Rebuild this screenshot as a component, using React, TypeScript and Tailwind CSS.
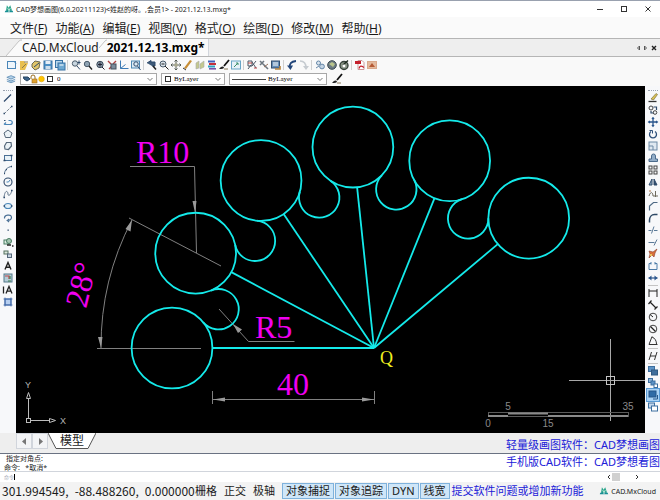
import type { ReactNode } from "react";

const NAVY = "#2f4a6b";
const BLUE = "#4a86b8";

type IconDef = { name: string; art: ReactNode };

const fileIcons: IconDef[] = [
  { name: "New", art: <><rect x="1.5" y="2.5" width="8" height="7" fill="#eef6fc" stroke={BLUE} /><path d="M8 2.5l2 2" stroke={BLUE} /></> },
  { name: "Open", art: <><path d="M2 2h4l1 2h3l-3 7H2z" fill="#e8bf4e" stroke="none" /><path d="M6 3h4M4 9l4-4" stroke="#8a7a4a" /></> },
  { name: "Open cloud", art: <><path d="M2 5l3-3 5 1-1 6-4 2-3-3z" fill="#e0c568" stroke="#6d6a50" /><path d="M4 8l5-4" stroke={NAVY} /></> },
  { name: "Save", art: <><rect x="2" y="2" width="8" height="8" fill="#4b8fc4" stroke="#3873a5" /><rect x="3.5" y="2" width="5" height="3" fill="#e5eef6" stroke="none" /><rect x="3.5" y="7" width="5" height="3" fill="#cfdfec" stroke="none" /></> },
  { name: "Save all", art: <><rect x="1.5" y="1.5" width="7" height="7" fill="#b9d7ec" stroke="#3873a5" /><rect x="4" y="4" width="7" height="7" fill="#6fa9d2" stroke="#3873a5" /><path d="M5.5 6h4" stroke="#fff" /></> },
];

const zoomIcons: IconDef[] = [
  { name: "Zoom in", art: <><circle cx="5" cy="4.5" r="2.7" fill="#c7d5df" stroke="#4c5d6d" /><path d="M7 7l3 3.5M9 1.5v4M7.5 3.5h3" stroke={NAVY} /></> },
  { name: "Zoom window", art: <><circle cx="5" cy="5" r="2.7" fill="#8fa3b3" stroke="#4c5d6d" /><path d="M7 7l3 3.5" stroke="#222" strokeWidth="1.4" /></> },
  { name: "Zoom extents", art: <><circle cx="6" cy="5.5" r="3.2" fill="#8494a3" stroke="#3c4a59" /><path d="M4 5.5h4M6 3.5v4M8 8l2.5 2.5" stroke="#223" /></> },
  { name: "Zoom all", art: <><path d="M2 2l3 3M10 2L7 5M3 10l3-3" stroke="#b04040" strokeWidth="1.4" /><rect x="5" y="5" width="5" height="5" fill="#7c8c9b" stroke="#44525f" /></> },
  { name: "Coordinate axes", art: <path d="M2.5 1.5v8h8M2.5 9.5l5-4" stroke="#3c7ab4" /> },
  { name: "Zoom object", art: <><rect x="1.5" y="2" width="8" height="7" fill="#dcebf5" stroke="#4c87b4" /><circle cx="6" cy="5" r="2.2" fill="none" stroke={NAVY} /><path d="M7.5 7l3 4" stroke={NAVY} /></> },
];

const matchIcon: IconDef = {
  name: "Match properties",
  art: <><path d="M11 1L6 7" stroke="#111" strokeWidth="1.8" /><path d="M1 10c2-3 4-3 5-2 0 2-2 2-5 2z" fill="#222" stroke="none" /><path d="M6 10h4" stroke="#8a7a5a" /></>,
};

const viewIcons: IconDef[] = [
  { name: "Previous view", art: <><path d="M1 4l4-2.5v1.5h4v4H6" fill="#3e5a78" stroke={NAVY} /><path d="M7 7l3 3.5" stroke="#222" strokeWidth="1.5" /></> },
  { name: "Real time zoom", art: <><circle cx="5" cy="5" r="3" fill="#d8e2ea" stroke="#4c5d6d" /><path d="M3.5 5h3M7 7l3.5 3.5" stroke="#222" /></> },
  { name: "Pan", art: <><path d="M6 1v10M1 6h10M4.5 2.5L6 1l1.5 1.5M4.5 9.5L6 11l1.5-1.5M2.5 4.5L1 6l1.5 1.5M9.5 4.5L11 6 9.5 7.5" stroke="#555c54" /><rect x="4.5" y="4.5" width="3" height="3" fill="#aaa98c" stroke="none" /></> },
  { name: "Pencil", art: <><path d="M2 9l2 1 6-8-2-1z" fill="#c78e35" stroke="none" /><path d="M1 9l3 2" stroke="#333" /></> },
  { name: "Measure", art: <><path d="M2 4l3-2v7l-3 1zM6 5l4-3v6l-4 2z" fill="#c4c98f" stroke="#aaa" strokeWidth=".6" /></> },
  { name: "Colors", art: <><path d="M2 2.5h7" stroke="#4160bd" strokeWidth="2" /><path d="M3 5h7" stroke="#c3303c" strokeWidth="2" /><path d="M2 7.5h7" stroke="#2d9fc4" strokeWidth="2" /><path d="M3 9.8h7" stroke="#7651ab" strokeWidth="1.6" /></> },
  matchIcon,
  { name: "Full screen", art: <><rect x="1.5" y="2" width="9" height="8" fill="#e6f1f8" stroke="#68a5c7" /><path d="M4 8l4-4M6 4h2v2" stroke="#3d8f6b" /></> },
];

const editIcons: IconDef[] = [
  { name: "Find", art: <><path d="M2 2h4v5H2zM6 3l4 6M2 10l3-4M10 2L6 7" stroke="#4b5664" /><path d="M2 4h4M8 9h3" stroke="#c04a4a" /></> },
  { name: "Tools", art: <><path d="M2 2l8 8M2 6l4-4" stroke="#6d7780" strokeWidth="1.6" /><path d="M6 8l4-3" stroke="#98735f" /></> },
  { name: "Layers table", art: <><rect x="1.5" y="2" width="8" height="7" fill="#668eb8" stroke="#334d6e" /><path d="M3 4h5M3 6h5" stroke="#fff" /><path d="M5 10h5V7" stroke="#b4833f" strokeWidth="1.6" /></> },
];

const historyIcons: IconDef[] = [
  { name: "Undo", art: <><path d="M4 9C3 5 5 2.5 10 2" stroke="#23467a" strokeWidth="1.8" /><path d="M1 6.5l3.5 4.5 2.5-4.5z" fill="#23467a" stroke="none" /></> },
  { name: "Redo", art: <><path d="M2 2c5 0 6 3 6 7" stroke="#c6cbd0" strokeWidth="1.6" /><path d="M5 7l3 4 3-4z" fill="#c6cbd0" stroke="none" /></> },
];

const cloudIcons: IconDef[] = [
  { name: "Cloud user", art: <><circle cx="4.5" cy="4" r="2" fill="#dbe5ee" stroke="#6587a8" /><circle cx="8" cy="7.5" r="2.4" fill="#c4d4e4" stroke="#6587a8" /><path d="M2 9l3-2" stroke="#6587a8" /></> },
  { name: "Cloud globe", art: <><circle cx="6" cy="6" r="4.3" fill="#6b7a83" stroke="#3d4a50" /><path d="M3 5l3-2 3 2-2 3z" fill="#b9c48b" stroke="none" /></> },
  { name: "Cloud sync", art: <><circle cx="6" cy="6.5" r="4" fill="#8a9587" stroke="#37423a" strokeWidth="1.4" /><path d="M5 6l5-4.5" stroke="#1d2a1f" strokeWidth="1.4" /><circle cx="6" cy="7" r="1.4" fill="#fff" stroke="none" /></> },
];

const exportIcons: IconDef[] = [
  { name: "Export PDF", art: <><path d="M4 1.5h4l2 2v7H4z" fill="#fff" stroke="#c99" /><rect x="1" y="2" width="6" height="3" fill="#c4202b" stroke="none" /><path d="M5 9.500c1-3 2-3 5-1" stroke="#c4202b" strokeWidth="1.2" /></> },
  { name: "Export image", art: <><rect x="1.5" y="2.5" width="9" height="7" fill="#e3b99d" stroke="#d9a98c" /><path d="M3 8l3-4 3 4z" fill="#b55a34" stroke="none" /></> },
];

const drawIcons: IconDef[] = [
  { name: "Line", art: <path d="M2 9.5l7-7" stroke={NAVY} strokeWidth="1.2" /> },
  { name: "Construction line", art: <><path d="M2 10l8-8" stroke="#7a8794" strokeDasharray="3 1" /><path d="M1.5 9.5h1.5M9 2.5h1.5" stroke={NAVY} strokeWidth="1.6" /></> },
  { name: "Polyline", art: <><path d="M2 8.5h6c3 0 3-4 0-4H6.5M2 8.5l2-2" stroke={BLUE} strokeWidth="1.2" /><path d="M2 4.5h1.5" stroke={NAVY} /></> },
  { name: "Polygon", art: <path d="M6 2l4 3-1.5 4.5h-5L2 5z" fill="#eaf1f6" stroke="#55677a" /> },
  { name: "Irregular polygon", art: <path d="M4.5 2.5L9 2.5 9.5 6 6.5 9.5 3 9 2.5 6z" fill="#eaf1f6" stroke="#55677a" strokeWidth="1.2" /> },
  { name: "Rectangle", art: <><rect x="2.5" y="3.5" width="7" height="5" fill="#e8f2f8" stroke="#4a6f95" /><path d="M1.5 8.5h2M8.5 3.5h2" stroke={NAVY} strokeWidth="1.6" /></> },
  { name: "Arc", art: <><path d="M2.5 10c0-4 3-7 7-7.5" stroke="#55708c" /><path d="M2 9.5h1M9 2.5h1M4 5.5h1" stroke={NAVY} strokeWidth="1.5" /></> },
  { name: "Circle", art: <><circle cx="6" cy="6" r="4" fill="none" stroke={NAVY} strokeWidth="1.1" /><path d="M4.5 6h2l1.5-2" stroke={BLUE} /></> },
  { name: "Spline", art: <><path d="M2 9.5C3 1 6 3 6 6s3 1 4-4" stroke="#5e7389" /><path d="M1.5 9.5H3M9 2.5h1.5" stroke={NAVY} strokeWidth="1.5" /></> },
  { name: "Ellipse", art: <><ellipse cx="6" cy="6" rx="3.5" ry="2.5" fill="#e4f0f8" stroke={BLUE} strokeWidth="1.2" /><path d="M1.5 6H3M9 6h1.5" stroke={NAVY} strokeWidth="1.5" /></> },
  { name: "Ellipse arc", art: <path d="M2.5 6.5C2 2.5 9 2 9.5 5c0 3-2.5 3.500-4 3.500L7 7M5.5 8.5L7 10" stroke="#4a6f95" strokeWidth="1.2" /> },
  { name: "Point", art: <rect x="5.500" y="5.500" width="1.300" height="1.300" fill={NAVY} stroke="none" /> },
  { name: "Insert block", art: <><rect x="2" y="4" width="5" height="4" fill="#dcebe1" stroke="#467b60" /><circle cx="7" cy="5" r="2.5" fill="#a5c4b1" stroke="#467b60" /><path d="M5 9h4M10 10h1.5" stroke="#222" strokeWidth="1.4" /></> },
  { name: "Create block", art: <><rect x="2" y="3" width="4" height="3" fill="#dce8df" stroke="#55705e" /><rect x="5.5" y="6" width="4" height="3.5" fill="#c9d6e0" stroke="#55677a" /></> },
  { name: "Text", art: <path d="M3 9.5L6 2.5l3 7M4 7.2h4" stroke="#222" strokeWidth="1.4" /> },
  { name: "Hatch", art: <><rect x="2" y="2" width="8" height="8" fill="#b4cdd8" stroke="#54788a" /><path d="M3 4h4v3" stroke="#c04848" strokeWidth="1.2" /><path d="M6 9h3M8 4v3" stroke="#3f7f4f" strokeWidth="1.2" /></> },
  { name: "Multiline text", art: <path d="M1.500 2.5v7M4 9.500l3-7 3 7M5 7.2h4" stroke="#222" strokeWidth="1.3" /> },
  { name: "Region", art: <><rect x="3" y="3" width="6" height="6" fill="#b7cff0" stroke="#3d66a5" /><path d="M3 1.5v9M9 1.5v9M1.5 3h9M1.5 9h9" stroke="#3d66a5" strokeWidth=".8" /></> },
];

const modifyIcons: IconDef[] = [
  { name: "Erase", art: <><path d="M4 7l5-5.5 1.5 1-4 5.5z" fill="#d9c057" stroke="#6e6430" strokeWidth=".6" /><path d="M1.5 9.5h8" stroke="#333" strokeWidth="1.3" /></> },
  { name: "Copy", art: <><circle cx="4" cy="4" r="2" fill="none" stroke="#444" /><path d="M6.5 3h3v3M4 7v2h3" stroke={NAVY} strokeWidth="1.2" /><circle cx="8" cy="8.5" r="1.8" fill="none" stroke="#444" /></> },
  { name: "Move", art: <path d="M6 2v8M2 6h8M5 3l1-1.300L7 3M5 9l1 1.300L7 9M3 5L1.700 6 3 7M9 5l1.300 1L9 7" stroke="#2b568d" strokeWidth="1.3" /> },
  { name: "Rotate", art: <><path d="M8 3.5a3.500 3.500 0 1 1-4 0" stroke="#2d4f7a" strokeWidth="1.3" /><path d="M2.5 2.5h3v3" stroke="#2d4f7a" /></> },
  { name: "Scale", art: <><rect x="2" y="2" width="8" height="8" fill="#dfe8f1" stroke="#6d89a5" /><path d="M2 6h4v4" stroke="#6d89a5" /></> },
  { name: "Offset", art: <><path d="M2 9.5h8.500V7H8.500V4a2 2 0 0 0-4 0v3H2z" fill="#92adc8" stroke="#4b6b8c" /></> },
  { name: "Array", art: <><rect x="2" y="2" width="3" height="3" fill="none" stroke="#444" /><rect x="7" y="2" width="3" height="3" fill="none" stroke="#444" /><rect x="2" y="7" width="3" height="3" fill="none" stroke="#444" /><rect x="7" y="7" width="3" height="3" fill="none" stroke="#444" /></> },
  { name: "Mirror", art: <><path d="M5 3v6H2z" fill="#8aa5bd" stroke={NAVY} /><path d="M7 3v6h3z" fill={NAVY} stroke={NAVY} /></> },
  { name: "Trim spline", art: <><path d="M2 8c2-6 4-3 4 0M6 8h5M8.5 3v6" stroke="#6e6a5d" /><path d="M2 3h2" stroke="#b37b4d" /></> },
  { name: "Chamfer", art: <path d="M2.5 10.5V6l4-3.500h4" stroke="#4f6a85" strokeWidth="1.2" /> },
  { name: "Fillet", art: <path d="M2.5 10.5V8c0-3 2-5.500 5-5.500h3" stroke="#2e4966" strokeWidth="1.5" /> },
  { name: "Trim", art: <path d="M1.5 6.5h3M7 6.5h3.5M4.500 9.5l2.500-7" stroke="#5b7a98" /> },
  { name: "Extend", art: <path d="M1.5 6.5h6M7 9.5l3-6" stroke="#5b7a98" /> },
  { name: "Explode", art: <><path d="M2 3l4 1 4-3-2 4-1 4-2-2-3 3 1-4z" fill="#d9713c" stroke="#8c3c2a" strokeWidth=".6" /><rect x="3" y="6" width="2" height="2" fill="#e9c25b" stroke="none" /></> },
  { name: "Break", art: <path d="M4 3.5H2v6h8v-6H8M4 2v2.5M8 2v2.5" stroke="#4d7ca8" /> },
  { name: "Join", art: <><path d="M1.5 6h9" stroke="#2b568d" strokeWidth="1.2" /><path d="M4.500 3.5L1.500 6l3 2.500zM7.500 3.5l3 2.500-3 2.500z" fill="#2b568d" stroke="none" /></> },
];

const dimIcons: IconDef[] = [
  { name: "Linear dimension", art: <path d="M2 2v8M10 2v8M2 4h8" stroke="#222" /> },
  { name: "Aligned dimension", art: <><path d="M3 3l6 6M1.5 5L4.5 1.5M7.5 10.5l3-3" stroke="#222" strokeWidth="1.2" /></> },
  { name: "Radius dimension", art: <><circle cx="6" cy="6" r="3.8" fill="none" stroke="#444" /><path d="M6 6L3 3.5" stroke="#222" /></> },
  { name: "Diameter dimension", art: <><circle cx="6" cy="6" r="3.8" fill="none" stroke="#444" /><path d="M3.5 3.5l5 5" stroke="#222" strokeWidth="1.2" /></> },
  { name: "Angular dimension", art: <path d="M5 1.500L2 9.500h8.500M5 2c3 1 4.500 4 4.500 7" stroke="#333" /> },
];

const dimEditIcon: IconDef = {
  name: "Edit dimension",
  art: <path d="M2 10L4.5 2M7.5 10L10 2M3 6h6" stroke="#333" />,
};

const orderIcons: IconDef[] = [
  { name: "Bring to front", art: <><rect x="1.5" y="1.5" width="6" height="5" fill="#5d93c6" stroke="#3c6f9f" /><rect x="4.5" y="5" width="6" height="5" fill="#3e6e9c" stroke="#2f5880" /></> },
  { name: "Bring above", art: <><rect x="1.5" y="1.5" width="4" height="4" fill="#8fb6da" stroke="#3c6f9f" /><rect x="4" y="4" width="4" height="4" fill="#5d93c6" stroke="#3c6f9f" /><rect x="7" y="7" width="3.5" height="3.5" fill="#fff" stroke="#3c6f9f" /></> },
  { name: "Send to back", art: <><rect x="2" y="2" width="7" height="6" fill="#2f6ba6" stroke="#27578a" /><path d="M6 10h4.5V6" stroke="#27578a" /></> },
  { name: "Send under", art: <><rect x="1.5" y="2" width="6" height="5" fill="#c4d8ee" stroke="#3c6f9f" /><rect x="4.5" y="5" width="6" height="5" fill="#fff" stroke="#3c6f9f" /></> },
];

function ToolButton({ icon, active }: { icon: IconDef; active?: boolean }) {
  return (
    <button
      type="button"
      aria-label={icon.name}
      className={active ? "h-3 w-3 bg-[#a9d2f5] outline outline-[#5a9bd5]" : "h-3 w-3 hover:bg-sky-100"}
    >
      <svg viewBox="0 0 12 12" fill="none" className="block h-full w-full">
        {icon.art}
      </svg>
    </button>
  );
}

function ToolGroup({ icons, active }: { icons: IconDef[]; active?: string }) {
  return icons.map((icon) => <ToolButton key={icon.name} icon={icon} active={icon.name === active} />);
}

const VSep = () => <span className="mr-0.5 ml-px h-2.5 w-px bg-[#d0d0d0]" />;
const HSep = () => <span className="my-px h-px w-2.5 bg-[#c4c4c4]" />;
const Grip = () => <span className="mt-1 mb-px h-px w-2.5 border-t border-dotted border-gray-400" />;

function Logo({ className }: { className: string }) {
  return (
    <svg viewBox="0 0 12 12" className={className} fill="none">
      <path d="M3.500 1.500l2 3 2-3 2 6-3 1-3 0-1-1z" fill="#2ba58b" />
      <path d="M1 10c0-2 2-3 4-2l1 2 1-2c2-1 4 0 4 2z" fill="#178f94" />
      <path d="M4.500 5l1.500 3 1.500-3" stroke="#d8f2ea" />
    </svg>
  );
}

function Chevron() {
  return (
    <svg viewBox="0 0 8 8" className="pointer-events-none h-2 w-2 shrink-0" fill="none">
      <path d="M1.500 3L4 5.500 6.500 3" stroke="#555" strokeWidth="0.8" />
    </svg>
  );
}

const selectClass =
  "ml-0.5 h-full min-w-0 flex-1 appearance-none bg-transparent font-['Liberation_Serif',serif] text-[7px] leading-none text-black outline-none";
const comboClass = "flex h-3 items-center border border-[#a8a8a8] bg-white px-0.5";

function PropertyBar() {
  return (
    <div className="flex h-3.5 items-center gap-1 pl-1.5">
      <button type="button" aria-label="Layer manager" className="h-3 w-2.5 shrink-0">
        <svg viewBox="0 0 12 12" fill="none" className="h-full w-full">
          <path d="M1 4l5-2 5 2-5 2zM1 6.500l5 2 5-2M1 8.500l5 2 5-2" fill="#b7d4ea" stroke="#5f8db5" />
        </svg>
      </button>
      <div className={`${comboClass} w-[137px]`}>
        <svg viewBox="0 0 32 10" className="h-2.5 w-8 shrink-0" fill="none">
          <path d="M0 3h5l2 2-3 2-3-2z" fill="#3c658c" stroke="#29455f" />
          <path d="M8 5V3a2 2 0 0 1 4 0v2" stroke="#9a6d1e" />
          <rect x="9" y="5" width="5" height="4" fill="#e0a230" stroke="#9a6d1e" strokeWidth=".6" />
          <circle cx="18.500" cy="5" r="2.800" fill="#ffc400" stroke="#e2a200" strokeWidth=".6" />
          <rect x="24.500" y="2.500" width="5" height="5" fill="#fff" stroke="#333" />
        </svg>
        <select aria-label="Layer" className={selectClass}>
          <option>0</option>
        </select>
        <Chevron />
      </div>
      <div className={`${comboClass} w-16`}>
        <svg viewBox="0 0 8 8" className="h-2 w-2 shrink-0" fill="none">
          <rect x="1.500" y="1.500" width="5" height="5" stroke="#333" />
        </svg>
        <select aria-label="Color" className={selectClass}>
          <option>ByLayer</option>
        </select>
        <Chevron />
      </div>
      <div className={`${comboClass} w-[98px]`}>
        <span className="h-px w-[34px] shrink-0 bg-[#444]" />
        <select aria-label="Line type" className={selectClass}>
          <option>ByLayer</option>
        </select>
        <Chevron />
      </div>
      <ToolButton icon={matchIcon} />
    </div>
  );
}

const menus = [
  ["文件", "F"],
  ["功能", "A"],
  ["编辑", "E"],
  ["视图", "V"],
  ["格式", "O"],
  ["绘图", "D"],
  ["修改", "M"],
  ["帮助", "H"],
];

// fan geometry: one drawing unit is 4.04px, circles sit every 28 degrees around Q
const Q = { x: 374, y: 348 };
const ARM = 202;
const R10 = 40.4;
const R5 = 20.2;

const polar = (dist: number, deg: number) => ({
  x: Q.x - dist * Math.cos((deg * Math.PI) / 180),
  y: Q.y - dist * Math.sin((deg * Math.PI) / 180),
});

const circles = [0, 28, 56, 84, 112, 140].map((deg) => ({ ...polar(ARM, deg), edge: polar(ARM - R10, deg) }));

const filletArcs = circles.slice(0, -1).map((a, i) => {
  const b = circles[i + 1];
  const s = polar(160.2, 28 * i + 14);
  const touch = (c: { x: number; y: number }) => `${c.x + ((s.x - c.x) * 2) / 3} ${c.y + ((s.y - c.y) * 2) / 3}`;
  return `M${touch(a)}A${R5} ${R5} 0 1 0 ${touch(b)}`;
});

function Drawing() {
  return (
    <svg
      viewBox="16 86 629 347"
      className="min-h-0 min-w-0 flex-1 bg-black"
      fill="none"
      role="img"
      aria-label="Model space"
    >
      <g stroke="#808080" strokeWidth="1">
        <path d="M130 166.500h64.500L196.500 253M129 218l92 48M97 348.500h104" />
        <path d="M101 348A273 273 0 0 1 132 220" />
        <path d="M219 309l29.500 32.500h46" />
        <path d="M212.500 391v13M374.500 391v13M213 399.500h161" />
      </g>
      <g fill="#9a9a9a">
        <path d="M192.500 201h4l-1.500 12zM132 220l-6.500 9 5 2.500zM101 348l-3-11h4.500zM233 324l5 9 4-3.500z" />
        <path d="M213 399.500l12-2v4zM374 399.500l-12-2v4z" />
      </g>

      <g stroke="#14eaea" strokeWidth="1.8">
        {circles.map((c, i) => (
          <g key={i}>
            <circle cx={c.x} cy={c.y} r={R10} />
            <path d={`M${c.edge.x} ${c.edge.y}L${Q.x} ${Q.y}`} />
          </g>
        ))}
        {filletArcs.map((d) => (
          <path key={d} d={d} />
        ))}
      </g>

      <g fill="#f000f0" className="font-['Liberation_Serif',serif] text-[32px]">
        <text x="136" y="163">R10</text>
        <text x="255" y="338">R5</text>
        <text x="277" y="395">40</text>
        <text transform="translate(86 309) rotate(-76)">28°</text>
      </g>
      <text x="380" y="364" fill="#f0f020" className="font-['Liberation_Serif',serif] text-[18px]">
        Q
      </text>

      <g stroke="#bdbdbd">
        <rect x="26.500" y="418.500" width="4" height="4" />
        <path d="M28.500 418V398M31 420.500h19M26.500 398.500l2-6 2 6zM49.500 418.500l6 2-6 2z" />
      </g>
      <g fill="#b5b5b5" className="font-['Liberation_Sans',sans-serif] text-[9px]">
        <text x="25" y="388">Y</text>
        <text x="60" y="424">X</text>
      </g>

      <path d="M610.500 339v82M569 380.500h76" stroke="#a8a8a8" />
      <rect x="606.500" y="376.500" width="8" height="8" stroke="#c4c4c4" />

      <rect x="488.500" y="412.500" width="140" height="4" stroke="#5a5a5a" />
      <path d="M488 416h20M548 416h80" stroke="#8a8a8a" strokeWidth="2" />
      <path d="M508 413.500h40" stroke="#8a8a8a" strokeWidth="2" />
      <g fill="#8a8a8a" textAnchor="middle" className="font-['Liberation_Sans',sans-serif] text-[10px]">
        <text x="508" y="410">5</text>
        <text x="628" y="410">35</text>
        <text x="488" y="427">0</text>
        <text x="548" y="427">15</text>
      </g>
    </svg>
  );
}

const toggles = [
  { label: "栅格", on: false },
  { label: "正交", on: false },
  { label: "极轴", on: false },
  { label: "对象捕捉", on: true },
  { label: "对象追踪", on: true },
  { label: "DYN", on: true },
  { label: "线宽", on: true },
];

export default function App() {
  return (
    <div className="flex h-screen flex-col overflow-hidden border-t border-gray-400 bg-[#f7f8fa] font-['Noto_Sans','Noto_Sans_CJK_SC',sans-serif] whitespace-nowrap text-[#1a1a1a]">
      {/* title bar */}
      <header className="flex h-4 shrink-0 items-center bg-white pl-1">
        <Logo className="mr-0.5 h-2.5 w-2.5" />
        <h1 className="text-[7px] leading-none">CAD梦想画图(6.0.20211123)&lt;姓赵的呀。,会员1&gt; - 2021.12.13.mxg*</h1>
        <div className="ml-auto flex items-center gap-3 pr-1.5">
          <button type="button" aria-label="Minimize" className="h-3 w-3">
            <svg viewBox="0 0 12 12" stroke="#333"><path d="M3 6.500h6" /></svg>
          </button>
          <button type="button" aria-label="Maximize" className="h-3 w-3">
            <svg viewBox="0 0 12 12" stroke="#333" fill="none"><rect x="3.500" y="3.500" width="5" height="5" /></svg>
          </button>
          <button type="button" aria-label="Close" className="h-3 w-3">
            <svg viewBox="0 0 12 12" stroke="#333"><path d="M3.500 3.500l5 5M8.500 3.500l-5 5" /></svg>
          </button>
        </div>
      </header>

      <nav className="flex h-[21px] shrink-0 items-center gap-2 bg-[#fafafa] pt-0.5 pl-2.5">
        {menus.map(([label, key]) => (
          <button key={key} type="button" className="text-[12px] leading-4">
            {label}(<span className="underline">{key}</span>)
          </button>
        ))}
      </nav>

      {/* open documents */}
      <div className="flex h-[19px] shrink-0 items-stretch border-y border-[#b5b5b5] bg-[#eeeeee] pl-1.5">
        <svg viewBox="0 0 16 17" className="h-full w-4" fill="#fafafa">
          <path d="M0 17L13 2q1-1 3-1v16z" />
          <path d="M0 17L13 2q1-1 3-1" fill="none" stroke="#c4c4c4" />
        </svg>
        <button type="button" className="bg-[#fafafa] text-left text-[12px] leading-none">
          CAD.MxCloud
        </button>
        <svg viewBox="0 0 8 17" className="h-full w-2 bg-[#fafafa]" fill="none">
          <path d="M0 9L6 2q1-1 2-1" stroke="#c4c4c4" />
        </svg>
        <button type="button" className="border-r border-gray-300 bg-[#fafafa] pr-1 text-left text-[12px] leading-none font-bold text-black">
          2021.12.13.mxg*
        </button>
        <div className="ml-auto flex items-center pr-0.5">
          <button type="button" aria-label="Previous tab" className="h-2 w-2">
            <svg viewBox="0 0 8 8" fill="none" stroke="#555"><path d="M5.500 2v4l-2-2z" /></svg>
          </button>
          <button type="button" aria-label="Next tab" className="h-2 w-2">
            <svg viewBox="0 0 8 8" fill="none" stroke="#555"><path d="M2.500 2v4l2-2z" /></svg>
          </button>
          <button type="button" aria-label="Close tab" className="h-2 w-2">
            <svg viewBox="0 0 8 8" fill="none" stroke="#222" strokeWidth="1.400"><path d="M2 2l4 4M6 2L2 6" /></svg>
          </button>
        </div>
      </div>

      <div className="shrink-0 bg-[#f9f9f9] pt-px">
        <div className="flex h-3.5 items-center pl-1.5">
          <ToolGroup icons={fileIcons} />
          <VSep />
          <ToolGroup icons={zoomIcons} />
          <VSep />
          <ToolGroup icons={viewIcons} />
          <VSep />
          <ToolGroup icons={editIcons} />
          <VSep />
          <ToolGroup icons={historyIcons} />
          <VSep />
          <ToolGroup icons={cloudIcons} />
          <VSep />
          <ToolGroup icons={exportIcons} />
        </div>
        <PropertyBar />
      </div>

      <main className="flex min-h-0 flex-1">
        <div className="flex w-4 shrink-0 flex-col items-center">
          <Grip />
          <ToolGroup icons={drawIcons} />
        </div>
        <Drawing />
        <div className="flex w-[15px] shrink-0 flex-col items-center">
          <Grip />
          <ToolGroup icons={modifyIcons} />
          <HSep />
          <ToolGroup icons={dimIcons} />
          <HSep />
          <ToolButton icon={dimEditIcon} />
          <HSep />
          <ToolGroup icons={orderIcons} active="Send to back" />
        </div>
      </main>

      {/* layout tabs */}
      <div className="flex h-5 shrink-0 items-start bg-[#eeeeee] pl-4">
        <button type="button" aria-label="Previous layout" className="h-4 w-4 border border-gray-300 bg-gray-100">
          <svg viewBox="0 0 14 14"><path d="M9 4v7L5 7.500z" fill="#777" /></svg>
        </button>
        <button type="button" aria-label="Next layout" className="h-4 w-4 border border-gray-300 bg-gray-100">
          <svg viewBox="0 0 14 14"><path d="M6 4v7l4-3.500z" fill="#777" /></svg>
        </button>
        <svg viewBox="0 0 10 16" className="h-4 w-2.5"><path d="M0 0l8 16h2V0z" fill="#fff" /><path d="M0 0l8 15.500h2" fill="none" stroke="#555" /></svg>
        <button type="button" className="h-4 border-b border-[#555] bg-white px-0.5 text-[12px] leading-4">模型</button>
        <svg viewBox="0 0 10 16" className="h-4 w-2.5"><path d="M10 0L2 16H0V0z" fill="#fff" /><path d="M10 0L2 15.500H0" fill="none" stroke="#555" /></svg>
        <a href="#desktop" className="ml-auto pt-1 text-[11px] leading-4 text-[#2020d8]">
          轻量级画图软件：CAD梦想画图
        </a>
      </div>

      {/* command line */}
      <section className="shrink-0 border-t border-gray-500 bg-white">
        <div className="flex h-[18px] items-start justify-between border-b border-gray-300 pl-1">
          <div className="text-[7px] leading-[9px]">
            <p className="pl-0.5">指定对角点:</p>
            <p>命令:&nbsp;&nbsp;&nbsp;*取消*</p>
          </div>
          <a href="#mobile" className="text-[11px] leading-4 text-[#2020d8]">
            手机版CAD软件：CAD梦想看图
          </a>
        </div>
        <div className="flex h-2.5 items-center pl-1">
          <label htmlFor="command" className="w-2.5 text-[5px] leading-none text-gray-400">命令</label>
          <span className="h-1.5 w-px bg-black" />
          <input id="command" className="h-2 min-w-0 flex-1 bg-transparent text-[7px] outline-none" />
          <div className="flex h-2 w-[34px] items-center justify-between">
            <svg viewBox="0 0 6 8" className="h-2 w-1.5" fill="none" stroke="#333"><path d="M4 2L2 4l2 2" /></svg>
            <span className="mr-auto h-2 w-2 bg-[#d0d0d0]" />
            <svg viewBox="0 0 6 8" className="h-2 w-1.5" fill="none" stroke="#333"><path d="M2 2l2 2-2 2" /></svg>
          </div>
          <span className="w-5" />
        </div>
      </section>

      <footer className="flex h-[18px] shrink-0 items-center bg-[#f3f3f3] pl-0.5">
        <p className="flex w-[193px] gap-1.5 font-['Noto_Sans_CJK_SC',sans-serif] text-[12px] leading-4">
          <span>301.994549,</span>
          <span>-88.488260,</span>
          <span>0.000000</span>
        </p>
        <div className="flex items-center">
          {toggles.map((t) => (
            <button
              key={t.label}
              type="button"
              aria-pressed={t.on}
              className={
                t.on
                  ? "mr-px h-4 border border-[#7fb2dc] bg-[#cfe6f8] px-[3px] text-[11px] leading-3.5"
                  : "mr-[7px] h-4 text-[11px] leading-4"
              }
            >
              {t.label}
            </button>
          ))}
        </div>
        <a href="#feedback" className="pl-px text-[11px] leading-4 text-[#2020d8]">
          提交软件问题或增加新功能
        </a>
        <div className="ml-auto flex items-center pr-1">
          <Logo className="mr-0.5 h-2.5 w-2.5" />
          <span className="text-[7px] leading-none">CAD.MxCloud</span>
        </div>
      </footer>
    </div>
  );
}
